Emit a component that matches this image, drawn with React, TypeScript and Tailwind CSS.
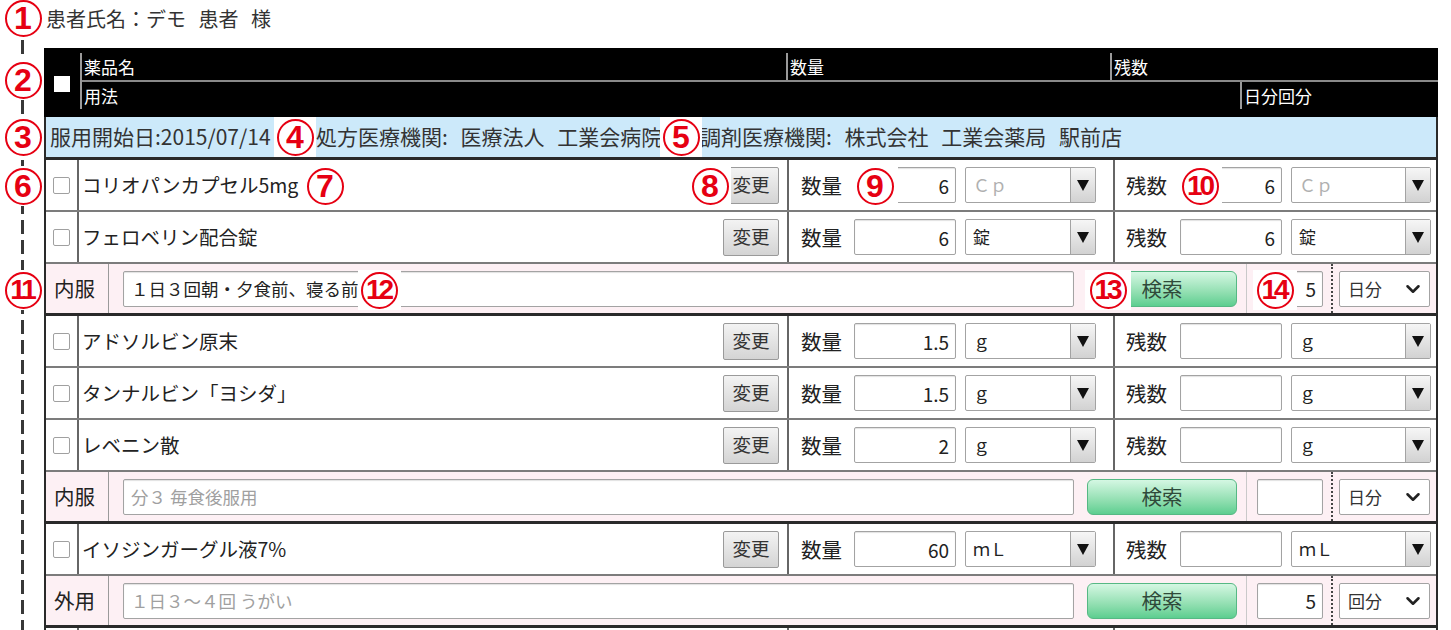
import React from 'react';
import { ChevronDown } from 'lucide-react';

type Drug = {
  name: string;
  qty: string;
  rem: string;
  unit: string;
  muted?: boolean;
};

type Group = {
  drugs: Drug[];
  kind: string;
  usage: string;
  placeholder?: boolean;
  days: string;
  per: string;
};

const groups: Group[] = [
  {
    drugs: [
      { name: 'コリオパンカプセル5mg', qty: '6', rem: '6', unit: 'Ｃｐ', muted: true },
      { name: 'フェロベリン配合錠', qty: '6', rem: '6', unit: '錠' },
    ],
    kind: '内服',
    usage: '１日３回朝・夕食前、寝る前',
    days: '5',
    per: '日分',
  },
  {
    drugs: [
      { name: 'アドソルビン原末', qty: '1.5', rem: '', unit: 'ｇ' },
      { name: 'タンナルビン「ヨシダ」', qty: '1.5', rem: '', unit: 'ｇ' },
      { name: 'レベニン散', qty: '2', rem: '', unit: 'ｇ' },
    ],
    kind: '内服',
    usage: '分３ 毎食後服用',
    placeholder: true,
    days: '',
    per: '日分',
  },
  {
    drugs: [{ name: 'イソジンガーグル液7%', qty: '60', rem: '', unit: 'ｍＬ' }],
    kind: '外用',
    usage: '１日３～４回 うがい',
    placeholder: true,
    days: '5',
    per: '回分',
  },
];

// red numbered markers laid over the screen
const marks = [
  { n: '1', cls: 'left-[2px] top-[-2px] w-[42px]' },
  { n: '2', cls: 'left-[2px] top-[60px] w-[42px]' },
  { n: '3', cls: 'left-[2px] top-[117px] w-[42px]' },
  { n: '4', cls: 'left-[274px] top-[117px] w-[42px]' },
  { n: '5', cls: 'left-[660px] top-[117px] w-[42px]' },
  { n: '6', cls: 'left-[2px] top-[166px] w-[42px]' },
  { n: '7', cls: 'left-[304px] top-[166px] w-[42px]' },
  { n: '8', cls: 'left-[689px] top-[166px] w-[42px]' },
  { n: '9', cls: 'left-[852px] top-[166px] w-[46px]' },
  { n: '10', cls: 'left-[1179px] top-[166px] w-[43px]' },
  { n: '11', cls: 'left-[2px] top-[270px] w-[42px]' },
  { n: '12', cls: 'left-[358px] top-[270px] w-[43px]' },
  { n: '13', cls: 'left-[1085px] top-[270px] w-[46px]' },
  { n: '14', cls: 'left-[1253px] top-[270px] w-[44px]' },
];

function Mark({ n, cls }: { n: string; cls: string }) {
  return (
    <div className={`absolute flex h-[40px] items-center justify-center bg-white ${cls}`}>
      <div className="flex h-[37px] w-[37px] items-center justify-center rounded-full border-2 border-[#e60012] font-['Liberation_Sans',sans-serif] font-bold leading-none text-[#e60012]">
        {n.length > 1 ? (
          <span className="text-[28px] tracking-[-3px] pr-[2px]">{n}</span>
        ) : (
          <span className="text-[32px]">{n}</span>
        )}
      </div>
    </div>
  );
}

function Select({ value, muted, w }: { value: string; muted?: boolean; w: string }) {
  return (
    <div className={`flex h-[36px] items-stretch rounded-[2px] border border-[#a3a3a3] bg-white ${w}`}>
      <div className={`flex flex-1 items-center pl-[7px] text-[17px] ${muted ? 'text-[#b0b0b0]' : 'text-[#222]'}`}>
        {value}
      </div>
      <div className="flex w-[25px] items-center justify-center border-l border-[#a3a3a3] bg-linear-to-b from-[#f6f6f6] to-[#d2d2d2]">
        <svg width="12" height="11" viewBox="0 0 12 11">
          <path d="M0 0H12L6 11Z" fill="#111" />
        </svg>
      </div>
    </div>
  );
}

function NumBox({ value, w }: { value: string; w: string }) {
  return (
    <input
      readOnly
      value={value}
      className={`h-[36px] rounded-[2px] border border-[#a3a3a3] bg-white pr-[6px] text-right text-[19px] text-[#222] shadow-[inset_0_1px_1px_rgba(0,0,0,0.12)] outline-none ${w}`}
    />
  );
}

function DrugRow({ d }: { d: Drug }) {
  return (
    <div className="flex h-[52px] border-b-2 border-[#7c7c7c]">
      <div className="flex w-[33px] items-center justify-center border-r-2 border-[#666]">
        <div className="h-[17px] w-[17px] rounded-[2px] border-[1.5px] border-[#a0a0a0] bg-white" />
      </div>
      <div className="flex w-[710px] items-center justify-between border-r-2 border-[#666] pl-[3px] pr-[8px]">
        <span className="text-[19.5px] text-[#222]">{d.name}</span>
        <button className="h-[37px] w-[56px] rounded-[2px] border border-[#9a9a9a] bg-linear-to-b from-[#f3f3f3] to-[#d4d4d4] text-[18.5px] text-[#333]">
          変更
        </button>
      </div>
      <div className="flex w-[326px] items-center border-r-2 border-[#666] pl-[12px]">
        <span className="w-[53px] text-[20.5px] text-[#222]">数量</span>
        <NumBox value={d.qty} w="w-[102px]" />
        <div className="ml-[9px]">
          <Select value={d.unit} muted={d.muted} w="w-[131px]" />
        </div>
      </div>
      <div className="flex flex-1 items-center pl-[11px]">
        <span className="w-[54px] text-[20.5px] text-[#222]">残数</span>
        <NumBox value={d.rem} w="w-[102px]" />
        <div className="ml-[9px]">
          <Select value={d.unit} muted={d.muted} w="w-[140px]" />
        </div>
      </div>
    </div>
  );
}

function UsageRow({ g }: { g: Group }) {
  return (
    <div className="flex h-[52px] border-b-[3px] border-[#2a2a2a] bg-[#fdf0f4]">
      <div className="flex w-[63px] items-center border-r border-[#9a9a9a] pl-[8px] text-[20.5px] text-[#222]">
        {g.kind}
      </div>
      <input
        readOnly
        value={g.placeholder ? '' : g.usage}
        placeholder={g.usage}
        className="my-auto ml-[14px] h-[36px] w-[951px] rounded-[2px] border border-[#a3a3a3] bg-white pl-[7px] text-[17.5px] text-[#222] shadow-[inset_0_1px_1px_rgba(0,0,0,0.12)] outline-none placeholder:text-[#a0a0a0]"
      />
      <button className="my-auto ml-[13px] h-[36px] w-[150px] rounded-[6px] border border-[#56b884] bg-linear-to-b from-[#d4f7e3] to-[#5cce90] text-[20.5px] text-[#2f4a3a]">
        検索
      </button>
      <div className="ml-[9px] flex flex-1 items-center border-l border-[#c9c9c9] pl-[10px]">
        <NumBox value={g.days} w="w-[66px]" />
        <div className="ml-[8px] h-full border-l-2 border-dotted border-[#444]" />
        <div className="ml-[6px] flex h-[36px] w-[91px] items-center justify-between rounded-[2px] border border-[#a3a3a3] bg-white pl-[8px] pr-[5px] text-[17px] text-[#333]">
          <span>{g.per}</span>
          <ChevronDown size={22} strokeWidth={2.8} color="#222" />
        </div>
      </div>
    </div>
  );
}

export default function App() {
  return (
    <div className="relative h-[630px] w-[1451px] overflow-hidden bg-white font-['Noto_Sans_CJK_JP','Noto_Sans',sans-serif]">
      <div className="flex h-[40px] items-start pl-[46px] pt-[4px] text-[20px] text-[#333] [word-spacing:8px]">
        患者氏名：デモ 患者 様
      </div>

      <div className="flex">
        <div className="flex w-[44px] pl-[21px]">
          <div className="w-[3px] bg-[repeating-linear-gradient(to_bottom,#383838_0px,#383838_14px,transparent_14px,transparent_20px)]" />
        </div>

        <div className="mt-[8px] w-[1394px]">
          <div className="flex h-[69px] bg-black pb-[8px] pt-[5px] text-[17px] leading-none text-white">
            <div className="flex w-[36px] items-center justify-center pt-[6px]">
              <div className="h-[16px] w-[16px] bg-white" />
            </div>
            <div className="flex flex-1 flex-col border-l-2 border-[#9a9a9a]">
              <div className="flex h-[29px] border-b-2 border-[#8a8a8a]">
                <div className="flex w-[704px] items-center pl-[2px]">薬品名</div>
                <div className="flex w-[324px] items-center border-l-2 border-[#9a9a9a] pl-[2px]">数量</div>
                <div className="flex flex-1 items-center border-l-2 border-[#9a9a9a] pl-[2px]">残数</div>
              </div>
              <div className="flex h-[27px]">
                <div className="flex w-[1158px] items-center pl-[2px]">用法</div>
                <div className="flex flex-1 items-center border-l-2 border-[#9a9a9a] pl-[2px]">日分回分</div>
              </div>
            </div>
          </div>

          <div className="border-x-2 border-[#2a2a2a]">
            <div className="flex h-[43px] items-center border-b-[3px] border-[#2a2a2a] bg-[#cce9fa] pl-[4px] text-[21px] text-[#333] [word-spacing:8px]">
              <span className="w-[266px] whitespace-nowrap">服用開始日:2015/07/14</span>
              <span className="w-[384px] whitespace-nowrap">処方医療機関: 医療法人 工業会病院</span>
              <span className="whitespace-nowrap">調剤医療機関: 株式会社 工業会薬局 駅前店</span>
            </div>

            {groups.map((g, gi) => (
              <div key={gi}>
                {g.drugs.map((d, di) => (
                  <DrugRow key={di} d={d} />
                ))}
                <UsageRow g={g} />
              </div>
            ))}

            <div className="flex h-[52px]">
              <div className="w-[33px] border-r-2 border-[#666]" />
              <div className="w-[710px] border-r-2 border-[#666]" />
              <div className="w-[326px] border-r-2 border-[#666]" />
            </div>
          </div>
        </div>
      </div>

      {marks.map((m) => (
        <Mark key={m.n} n={m.n} cls={m.cls} />
      ))}
    </div>
  );
}
